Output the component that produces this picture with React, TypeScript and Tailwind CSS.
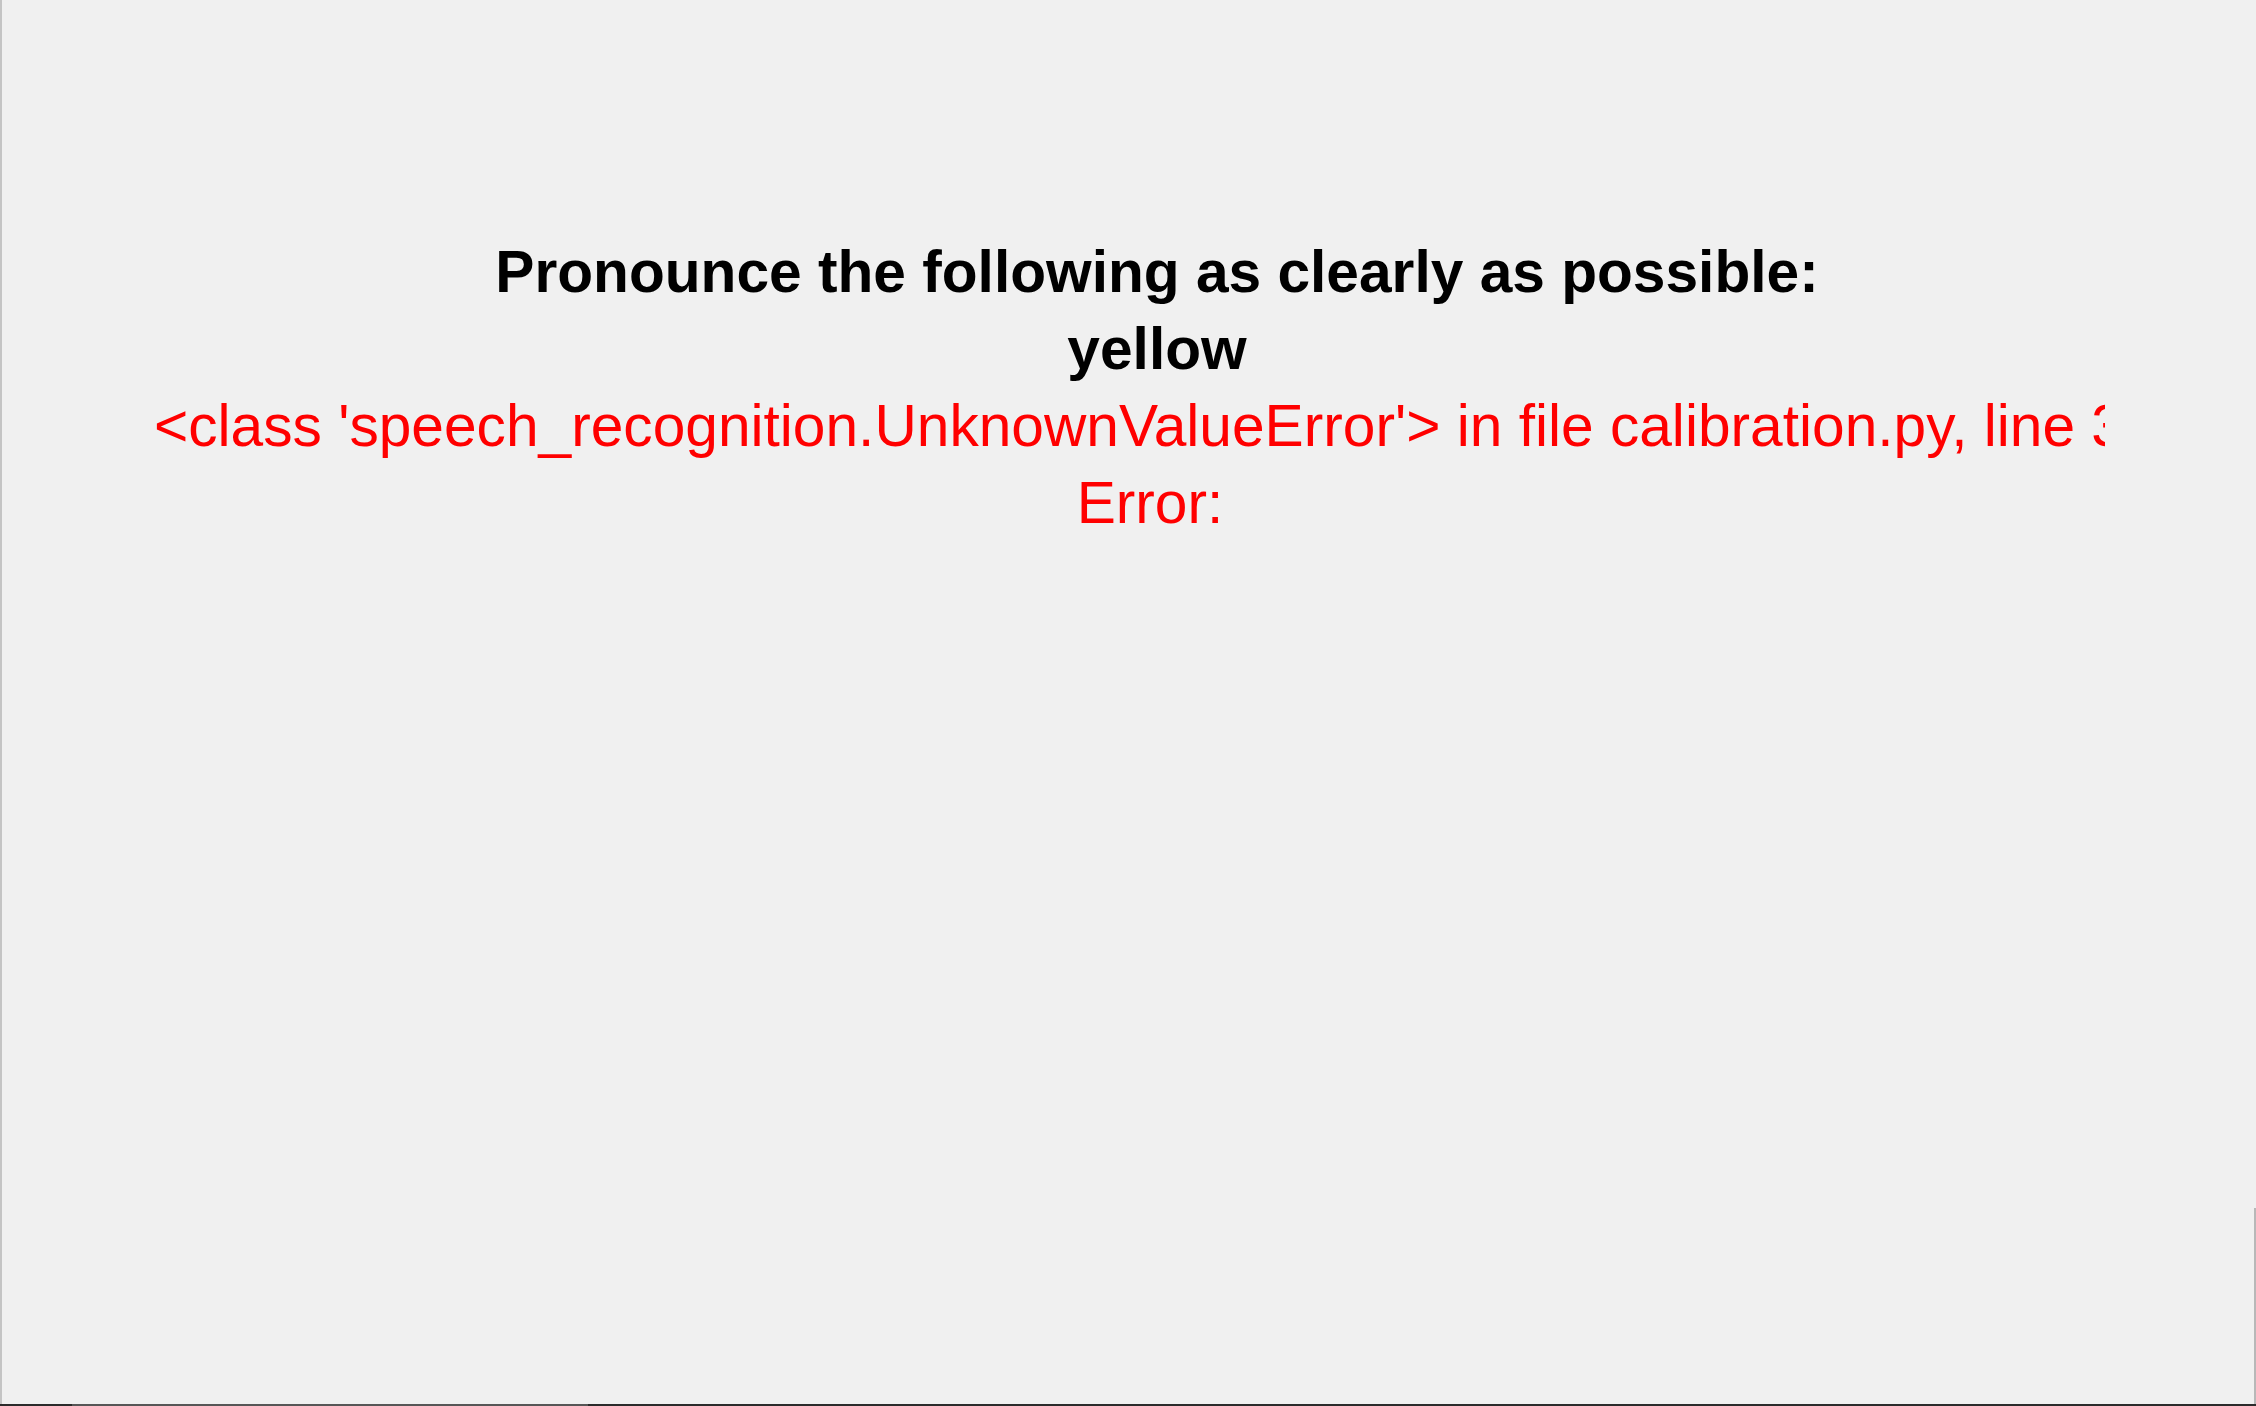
export default function App() {
  const font = { fontFamily: '"Liberation Sans", Arial, sans-serif' };
  return (
    <div className="relative w-[2256px] h-[1406px] overflow-hidden bg-[#f0f0f0]" style={font}>
      <div className="absolute left-0 top-0 w-[2px] h-[1406px] bg-[#c4c4c4]" />
      <div className="absolute right-0 top-[1208px] w-[2px] h-[198px] bg-[#b8b8b8]" />
      <div className="absolute left-0 bottom-0 flex h-[2px] w-[2256px]">
        <div className="w-[72px] bg-[#2b2b2b]" />
        <div className="w-[516px] bg-[#565656]" />
        <div className="flex-1 bg-[#2b2b2b]" />
      </div>
      <div className="flex flex-col items-center pt-[233px] pl-[58px] text-[58.67px] leading-[77px]">
        <div className="font-bold text-black whitespace-nowrap">Pronounce the following as clearly as possible:</div>
        <div className="font-bold text-black">yellow</div>
        <div className="self-start ml-[96px] w-[1951px] overflow-hidden whitespace-nowrap text-[#ff0000]">
          &lt;class 'speech_recognition.UnknownValueError'&gt; in file calibration.py, line 35
        </div>
        <div className="mr-[14px] text-[#ff0000]">Error:</div>
      </div>
    </div>
  );
}
